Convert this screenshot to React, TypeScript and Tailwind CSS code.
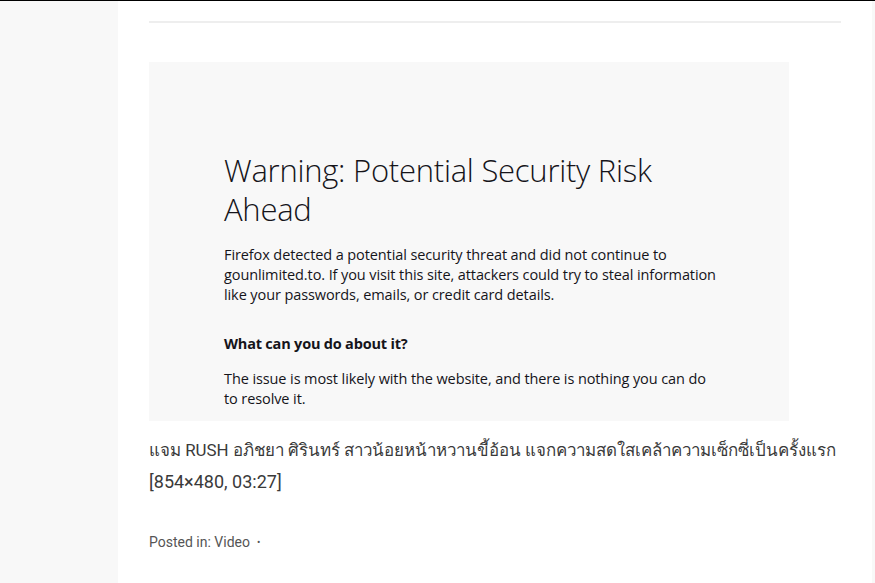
import React from 'react'

const App = () => {
  return (
    <div className="min-h-[583px] bg-[#f8f8f8] border-t border-black flex overflow-hidden">
      {/* left rail */}
      <div className="w-[118px] shrink-0" />

      {/* main column */}
      <div className="w-[754px] shrink-0 bg-white min-h-[582px] px-[31px] pt-[20px]">
        <div className="border-t-2 border-[#eeeeee]" />

        {/* embedded error page */}
        <div className="mt-[39px] w-[640px] h-[359px] bg-[#f8f8f8] pl-[75px] pr-[69px] pt-[89px] font-['Open_Sans',sans-serif] text-[#15141a]">
          <h1 className="text-[31px] leading-[39px] font-light tracking-[-0.25px]">
            Warning: Potential Security Risk Ahead
          </h1>
          <p className="mt-[16px] text-[14.5px] leading-[20px] tracking-[-0.1px]">
            Firefox detected a potential security threat and did not continue to
            gounlimited.to. If you visit this site, attackers could try to steal
            information like your passwords, emails, or credit card details.
          </p>
          <h2 className="mt-[29px] text-[14.5px] leading-[20px] font-bold tracking-[-0.2px]">
            What can you do about it?
          </h2>
          <p className="mt-[15px] text-[14.5px] leading-[20px] tracking-[-0.1px]">
            The issue is most likely with the website, and there is nothing you can do
            to resolve it.
          </p>
        </div>

        <p className="mt-[13px] text-[16.9px] leading-[32px] text-[#3a3a3a] font-['Roboto','Noto_Sans',sans-serif] whitespace-nowrap">
          แจม RUSH อภิชยา ศิรินทร์ สาวน้อยหน้าหวานขี้อ้อน แจกความสดใสเคล้าความเซ็กซี่เป็นครั้งแรก
          <br />
          <span className="text-[18px]">[854×480, 03:27]</span>
        </p>

        <div className="mt-[34px] text-[14px] text-[#555555] font-['Roboto',sans-serif] flex items-center gap-[7px]">
          <span>Posted in: Video</span>
          <span className="text-[10px]">•</span>
        </div>
      </div>

      {/* right rail */}
      <div className="flex-1" />
    </div>
  )
}

export default App
